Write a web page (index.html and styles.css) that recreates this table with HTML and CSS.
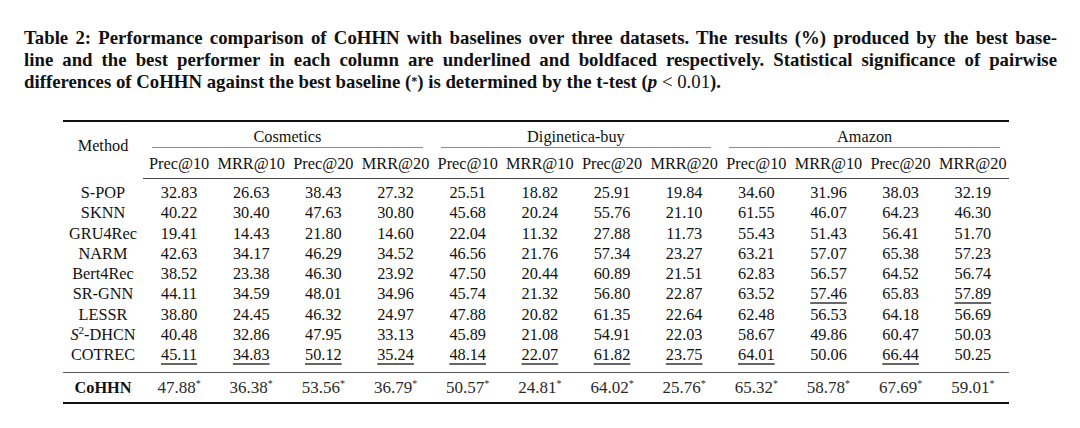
FILE: index.html
```html
<!DOCTYPE html>
<html>
<head>
<meta charset="utf-8">
<link rel="stylesheet" href="styles.css">
</head>
<body>
<div class="page">
  <p class="caption">
    <span class="ln">Table 2: Performance comparison of CoHHN with baselines over three datasets. The results (%) produced by the best base-</span>
    <span class="ln">line and the best performer in each column are underlined and boldfaced respectively. Statistical significance of pairwise</span>
    <span class="ln last">differences of CoHHN against the best baseline (<span class="ast">*</span>) is determined by the t-test (<i>p</i> <span class="math">&lt; 0.01</span>).</span>
  </p>
  <table class="perf">
    <colgroup>
      <col class="c-method">
      <col><col><col><col><col><col><col><col><col><col><col><col>
    </colgroup>
    <thead>
      <tr class="grp-row">
        <th class="method" rowspan="2">Method</th>
        <th class="grp" colspan="4"><div class="grp-label">Cosmetics</div></th>
        <th class="grp" colspan="4"><div class="grp-label">Diginetica-buy</div></th>
        <th class="grp" colspan="4"><div class="grp-label">Amazon</div></th>
      </tr>
      <tr class="sub-row">
        <th>Prec@10</th><th>MRR@10</th><th>Prec@20</th><th>MRR@20</th>
        <th>Prec@10</th><th>MRR@10</th><th>Prec@20</th><th>MRR@20</th>
        <th>Prec@10</th><th>MRR@10</th><th>Prec@20</th><th>MRR@20</th>
      </tr>
    </thead>
    <tbody class="base">
      <tr class="first"><td>S-POP</td><td>32.83</td><td>26.63</td><td>38.43</td><td>27.32</td><td>25.51</td><td>18.82</td><td>25.91</td><td>19.84</td><td>34.60</td><td>31.96</td><td>38.03</td><td>32.19</td></tr>
      <tr><td>SKNN</td><td>40.22</td><td>30.40</td><td>47.63</td><td>30.80</td><td>45.68</td><td>20.24</td><td>55.76</td><td>21.10</td><td>61.55</td><td>46.07</td><td>64.23</td><td>46.30</td></tr>
      <tr><td>GRU4Rec</td><td>19.41</td><td>14.43</td><td>21.80</td><td>14.60</td><td>22.04</td><td>11.32</td><td>27.88</td><td>11.73</td><td>55.43</td><td>51.43</td><td>56.41</td><td>51.70</td></tr>
      <tr><td>NARM</td><td>42.63</td><td>34.17</td><td>46.29</td><td>34.52</td><td>46.56</td><td>21.76</td><td>57.34</td><td>23.27</td><td>63.21</td><td>57.07</td><td>65.38</td><td>57.23</td></tr>
      <tr><td>Bert4Rec</td><td>38.52</td><td>23.38</td><td>46.30</td><td>23.92</td><td>47.50</td><td>20.44</td><td>60.89</td><td>21.51</td><td>62.83</td><td>56.57</td><td>64.52</td><td>56.74</td></tr>
      <tr><td>SR-GNN</td><td>44.11</td><td>34.59</td><td>48.01</td><td>34.96</td><td>45.74</td><td>21.32</td><td>56.80</td><td>22.87</td><td>63.52</td><td><span class="ul">57.46</span></td><td>65.83</td><td><span class="ul">57.89</span></td></tr>
      <tr><td>LESSR</td><td>38.80</td><td>24.45</td><td>46.32</td><td>24.97</td><td>47.88</td><td>20.82</td><td>61.35</td><td>22.64</td><td>62.48</td><td>56.53</td><td>64.18</td><td>56.69</td></tr>
      <tr><td><i>S</i><sup class="sq">2</sup>-DHCN</td><td>40.48</td><td>32.86</td><td>47.95</td><td>33.13</td><td>45.89</td><td>21.08</td><td>54.91</td><td>22.03</td><td>58.67</td><td>49.86</td><td>60.47</td><td>50.03</td></tr>
      <tr class="last"><td>COTREC</td><td><span class="ul">45.11</span></td><td><span class="ul">34.83</span></td><td><span class="ul">50.12</span></td><td><span class="ul">35.24</span></td><td><span class="ul">48.14</span></td><td><span class="ul">22.07</span></td><td><span class="ul">61.82</span></td><td><span class="ul">23.75</span></td><td><span class="ul">64.01</span></td><td>50.06</td><td><span class="ul">66.44</span></td><td>50.25</td></tr>
    </tbody>
    <tbody class="ours">
      <tr><td class="name">CoHHN</td><td>47.88<sup>*</sup></td><td>36.38<sup>*</sup></td><td>53.56<sup>*</sup></td><td>36.79<sup>*</sup></td><td>50.57<sup>*</sup></td><td>24.81<sup>*</sup></td><td>64.02<sup>*</sup></td><td>25.76<sup>*</sup></td><td>65.32<sup>*</sup></td><td>58.78<sup>*</sup></td><td>67.69<sup>*</sup></td><td>59.01<sup>*</sup></td></tr>
    </tbody>
  </table>
</div>
</body>
</html>
```
FILE: styles.css
```css
html, body {
  margin: 0;
  padding: 0;
  background: #ffffff;
}

body {
  font-family: "Liberation Serif", "Times New Roman", serif;
  color: #111111;
}

.page {
  padding: 27px 0 0 24px;
}

.caption {
  margin: 0;
  width: 1033px;
  font-size: 18.8px;
  font-weight: bold;
  line-height: 22px;
}

.caption .ln {
  display: block;
  text-align: justify;
  text-align-last: justify;
}

.caption .ln.last {
  text-align-last: left;
}

.caption .math {
  font-weight: normal;
}

.caption .ast {
  font-size: 12px;
  vertical-align: 3px;
  line-height: 0;
}

.perf {
  margin: 27px 0 0 39px;
  width: 946px;
  border-collapse: collapse;
  table-layout: fixed;
  font-size: 16.3px;
  border-top: 2px solid #111111;
  border-bottom: 2px solid #111111;
}

.perf .c-method {
  width: 80px;
}

.perf th,
.perf td {
  padding: 0;
  text-align: center;
  font-weight: normal;
  white-space: nowrap;
}

.grp-row th {
  height: 26px;
}

.grp-row th.grp {
  padding: 0 9px;
  vertical-align: bottom;
}

.grp-label {
  line-height: 20px;
  border-bottom: 1px solid #8a8a8a;
}

.grp-row th.method {
  vertical-align: middle;
  padding-bottom: 8px;
  line-height: 20px;
}

.sub-row th {
  line-height: 20px;
  padding: 6px 0 4px;
  border-bottom: 1px solid #444444;
}

.base td {
  line-height: 20.25px;
}

.base tr.first td {
  padding-top: 4px;
}

.base tr.last td {
  padding-bottom: 7px;
}

.ul {
  text-decoration: underline;
  text-decoration-thickness: 1.5px;
  text-underline-offset: 3px;
  text-decoration-color: #666666;
}

.sq {
  font-size: 11px;
  vertical-align: 6px;
  line-height: 0;
}

.ours td {
  border-top: 1px solid #555555;
  line-height: 20px;
  padding: 5px 0 4px;
  color: #2a2a2a;
  font-size: 17px;
}

.ours td.name {
  font-weight: bold;
  color: #111111;
  font-size: 16.3px;
}

.ours sup {
  font-size: 10px;
  vertical-align: 6px;
  line-height: 0;
}
```
